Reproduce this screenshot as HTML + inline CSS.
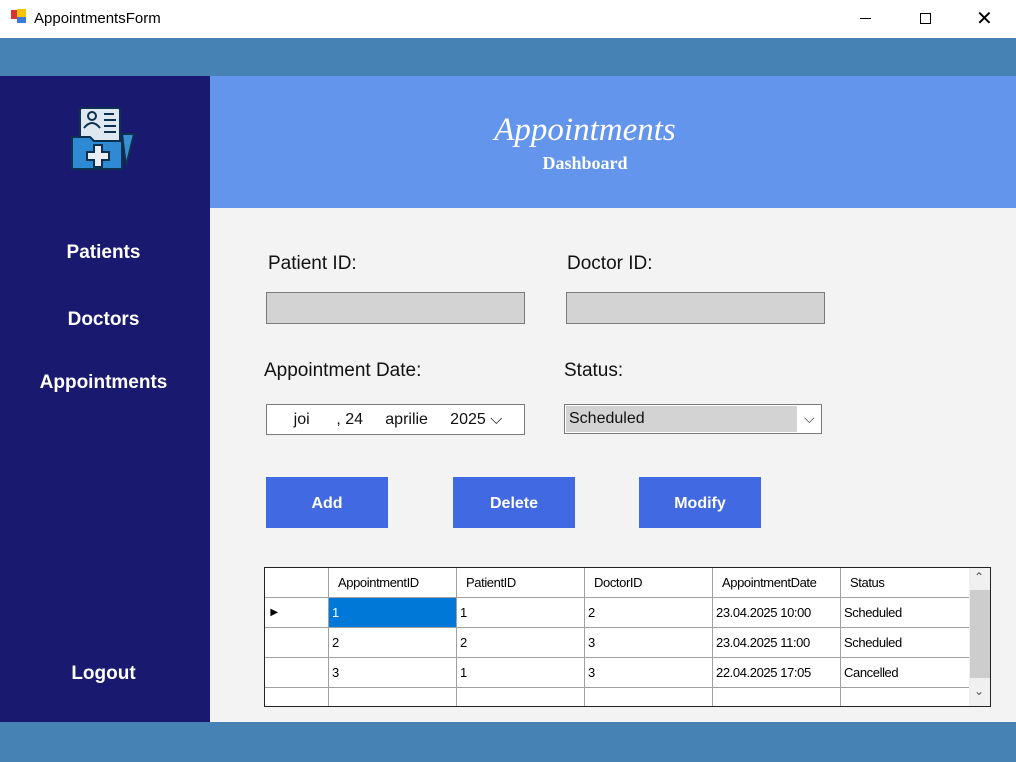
<!DOCTYPE html><html><head><style>
*{margin:0;padding:0;box-sizing:border-box}
body{width:1016px;height:762px;position:relative;overflow:hidden;background:#f3f3f3;font-family:"Liberation Sans",sans-serif}
.a{position:absolute}
.nav{color:#fff;font-weight:bold;font-size:19px;width:207px;text-align:center;left:0}
.lbl{font-size:19px;color:#111}
.btn{background:#4169e1;color:#fff;font-size:16px;font-weight:bold;text-align:center;line-height:53px;width:122px;height:51px;top:477px}
table{border-collapse:collapse;table-layout:fixed;font-size:13px;font-family:"Liberation Sans",sans-serif;letter-spacing:-0.4px}
td{border:1px solid #a0a0a0;padding:0 3px;height:30px;background:#fff;overflow:hidden;white-space:nowrap}
tr.h td{padding-left:9px}
</style></head><body>
<div class="a" style="left:0;top:0;width:1016px;height:38px;background:#fff"></div>
<div class="a" style="left:11px;top:10px;width:7px;height:9px;background:#d33"></div>
<div class="a" style="left:17px;top:9px;width:9px;height:8px;background:#f5c400"></div>
<div class="a" style="left:17px;top:17px;width:9px;height:6px;background:#3a7bd5"></div>
<div class="a" style="left:34px;top:10px;font-size:15px;color:#000">AppointmentsForm</div>
<div class="a" style="left:860px;top:18px;width:11px;height:1px;background:#000"></div>
<div class="a" style="left:920px;top:13px;width:11px;height:11px;border:1px solid #000"></div>
<div class="a" style="left:976px;top:6px;font-size:20px;color:#000">✕</div>
<div class="a" style="left:0;top:38px;width:1016px;height:38px;background:#4682b4"></div>
<div class="a" style="left:0;top:722px;width:1016px;height:40px;background:#4682b4"></div>
<div class="a" style="left:0;top:76px;width:210px;height:646px;background:#191970"></div>
<svg class="a" style="left:70px;top:106px" width="66" height="68" viewBox="0 0 66 68">
<rect x="10" y="2" width="40" height="36" rx="2" fill="#dfe8f0" stroke="#0c3050" stroke-width="2"/>
<circle cx="22" cy="10" r="4" fill="none" stroke="#0c3050" stroke-width="2"/>
<path d="M14 22 q8-10 16 0" fill="none" stroke="#0c3050" stroke-width="2"/>
<path d="M34 8h10M34 14h12M34 20h12M34 26h12" stroke="#0c3050" stroke-width="2"/>
<path d="M52 28 L64 28 L56 60 Z" fill="#3a8fd0" stroke="#0c3050" stroke-width="2"/>
<path d="M2 31 h18 l4 4 h28 v28 h-50 Z" fill="#2f8ad4" stroke="#0c3050" stroke-width="2"/>
<path d="M24 39h8v7h7v8h-7v7h-8v-7h-7v-8h7z" fill="#e8eef4" stroke="#0c3050" stroke-width="2"/>
</svg>
<div class="a nav" style="top:242px">Patients</div>
<div class="a nav" style="top:309px">Doctors</div>
<div class="a nav" style="top:372px">Appointments</div>
<div class="a nav" style="top:663px">Logout</div>
<div class="a" style="left:210px;top:76px;width:806px;height:132px;background:#6495ed"></div>
<div class="a" style="left:210px;top:112px;width:750px;text-align:center;color:#fff;font-size:33px;font-style:italic;font-family:'Liberation Serif',serif">Appointments</div>
<div class="a" style="left:210px;top:153px;width:750px;text-align:center;color:#fff;font-size:18px;font-weight:bold;font-family:'Liberation Serif',serif">Dashboard</div>
<div class="a lbl" style="left:268px;top:253px">Patient ID:</div>
<div class="a lbl" style="left:567px;top:253px">Doctor ID:</div>
<div class="a" style="left:266px;top:292px;width:259px;height:32px;background:#d3d3d3;border:1px solid #7a7a7a"></div>
<div class="a" style="left:566px;top:292px;width:259px;height:32px;background:#d3d3d3;border:1px solid #7a7a7a"></div>
<div class="a lbl" style="left:264px;top:360px">Appointment Date:</div>
<div class="a lbl" style="left:564px;top:360px">Status:</div>
<div class="a" style="left:266px;top:404px;width:259px;height:31px;background:#fff;border:1px solid #7a7a7a;font-size:16px;color:#111;line-height:29px;white-space:pre">      joi      , 24     aprilie     2025 ⌵</div>
<div class="a" style="left:564px;top:404px;width:258px;height:30px;background:#fff;border:1px solid #7a7a7a"></div>
<div class="a" style="left:566px;top:406px;width:231px;height:26px;background:#d3d3d3;font-size:16px;line-height:25px;padding-left:3px;color:#111">Scheduled</div>
<div class="a" style="left:804px;top:410px;font-size:14px;color:#333">⌵</div>
<div class="a btn" style="left:266px">Add</div>
<div class="a btn" style="left:453px">Delete</div>
<div class="a btn" style="left:639px">Modify</div>
<div class="a" style="left:264px;top:567px;width:727px;height:140px;border:1px solid #222;background:#fff;overflow:hidden">
<table style="position:absolute;left:-1px;top:-1px;width:705px">
<colgroup><col style="width:64px"><col style="width:128px"><col style="width:128px"><col style="width:128px"><col style="width:128px"><col style="width:129px"></colgroup>
<tr class="h"><td style="height:29px"></td><td>AppointmentID</td><td>PatientID</td><td>DoctorID</td><td>AppointmentDate</td><td>Status</td></tr>
<tr><td style="font-size:10px">&nbsp;▶</td><td style="background:#0078d7;color:#fff">1</td><td>1</td><td>2</td><td>23.04.2025 10:00</td><td>Scheduled</td></tr>
<tr><td></td><td>2</td><td>2</td><td>3</td><td>23.04.2025 11:00</td><td>Scheduled</td></tr>
<tr><td></td><td>3</td><td>1</td><td>3</td><td>22.04.2025 17:05</td><td>Cancelled</td></tr>
<tr><td style="font-size:9px;vertical-align:bottom">&nbsp;&nbsp;●</td><td></td><td></td><td></td><td></td><td></td></tr>
</table>
<div class="a" style="left:704px;top:0;width:22px;height:138px;background:#f0f0f0"></div>
<div class="a" style="left:705px;top:22px;width:20px;height:88px;background:#cdcdcd"></div>
<div class="a" style="left:709px;top:2px;font-size:12px;color:#555">⌃</div>
<div class="a" style="left:709px;top:116px;font-size:12px;color:#555">⌄</div>
</div>
</body></html>
